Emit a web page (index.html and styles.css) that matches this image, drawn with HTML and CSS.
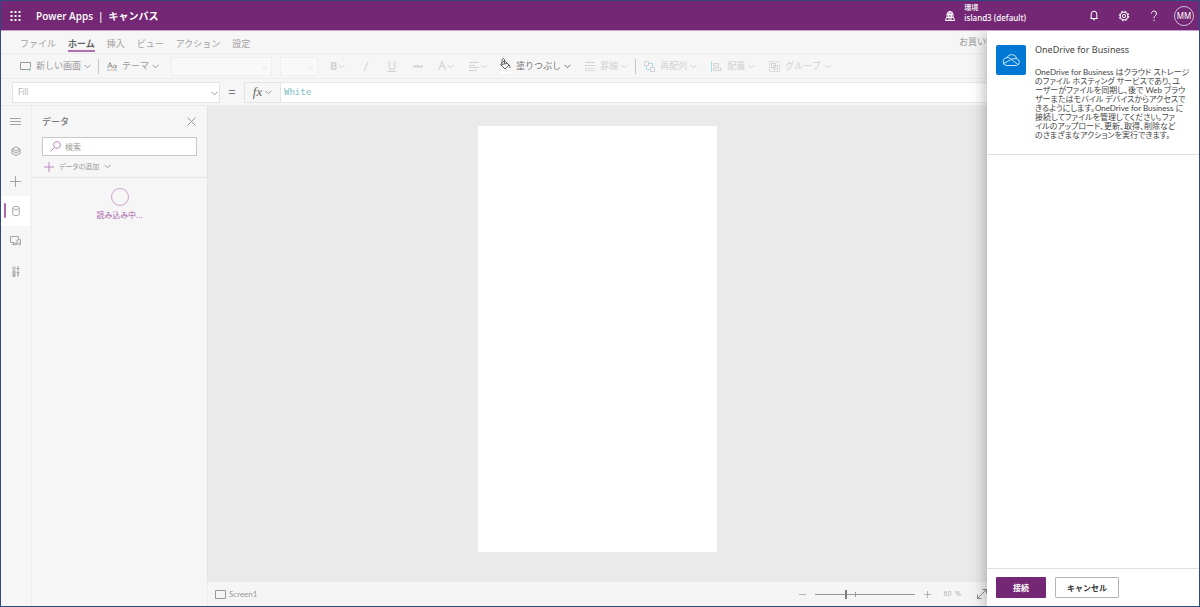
FILE: index.html
```html
<!DOCTYPE html>
<html lang="ja">
<head>
    <meta charset="UTF-8">
    <meta name="viewport" content="width=device-width, initial-scale=1.0">
    <title>Power Apps | キャンバス</title>
    <link rel="stylesheet" href="styles.css">
</head>
<body>
<svg class="defs" aria-hidden="true">
    <symbol id="chev" viewBox="0 0 7 5"><path d="M.5 .8l3 3 3-3"/></symbol>
</svg>

<header class="topbar">
    <button class="waffle" aria-label="アプリ起動ツール">
        <svg width="11" height="11" viewBox="0 0 11 11"><path d="M1.5 0v11M5.5 0v11M9.5 0v11" stroke-width="2" stroke-dasharray="2 2" stroke-dashoffset="3"/></svg>
    </button>
    <h1 class="brand">Power Apps<span class="bar">|</span>キャンバス</h1>
    <div class="environment">
        <svg width="10" height="10" viewBox="0 0 10 10"><path d="M2 6V3.5a3 3 0 0 1 6 0V6M5 .5v6M3.6 6V3c0-1 .5-2 1.4-2.500.9.5 1.400 1.500 1.400 2.500v3M2 3.500h6M1.500 6.500h7l1 3h-9zM3 8h4"/></svg>
        <div class="env-text">
            <div class="env-label">環境</div>
            <div class="env-name">island3 (default)</div>
        </div>
    </div>
    <button class="top-icon" aria-label="通知">
        <svg width="10" height="11" viewBox="0 0 10 11"><path d="M2.200 8V4a2.800 2.800 0 0 1 5.600 0v4M1.200 8.500h7.600M4 9.500q1 1 2 0"/></svg>
    </button>
    <button class="top-icon" aria-label="設定">
        <svg width="12" height="12" viewBox="0 0 12 12"><circle cx="6" cy="6" r="4.800" stroke-width="1" stroke-dasharray="2 1.770"/><circle cx="6" cy="6" r="3.900"/><circle cx="6" cy="6" r="1.600"/></svg>
    </button>
    <button class="top-icon" aria-label="ヘルプ">
        <svg width="8" height="12" viewBox="0 0 8 12"><path d="M1.500 3.500a2.500 2.500 0 1 1 4.200 1.800C4.500 6.300 4 6.800 4 8.300M4 9.800v1.200"/></svg>
    </button>
    <button class="avatar">MM</button>
</header>

<div class="app">
    <div class="studio">
        <nav class="menu">
            <a href="#">ファイル</a>
            <a href="#" class="current">ホーム</a>
            <a href="#">挿入</a>
            <a href="#">ビュー</a>
            <a href="#">アクション</a>
            <a href="#">設定</a>
            <span class="app-name">お買い物</span>
        </nav>

        <div class="toolbar">
            <button class="tool">
                <svg width="11" height="10" viewBox="0 0 11 10"><path d="M8 8.500H.5v-7h10v5"/><path class="green" d="M9.500 7v3M8 8.500h3"/></svg>
                新しい画面<svg class="chev"><use href="#chev"/></svg>
            </button>
            <span class="divider"></span>
            <button class="tool theme">
                <svg width="10" height="10" viewBox="0 0 10 10"><path d="M.5 7L3 1.500 5.500 7M1.300 5.200h3.400M9 4v3.200M9 5.500a1.500 1.500 0 1 0 0 .2"/><path class="blue" d="M0 9h3"/><path class="orange" d="M3 9h4"/><path class="blue" d="M7 9h3"/></svg>
                テーマ<svg class="chev"><use href="#chev"/></svg>
            </button>
            <div class="picker font-picker"><select aria-label="フォント" disabled></select><svg class="chev"><use href="#chev"/></svg></div>
            <div class="picker size-picker"><select aria-label="フォント サイズ" disabled></select><svg class="chev"><use href="#chev"/></svg></div>
            <div class="formats">
                <button class="tool off bold">B<svg class="chev"><use href="#chev"/></svg></button>
                <button class="tool off glyph" aria-label="斜体"><svg width="6" height="11" viewBox="0 0 6 11"><path d="M1 10L5 1"/></svg></button>
                <button class="tool off glyph underline">U</button>
                <button class="tool off glyph strike">abc</button>
                <button class="tool off glyph">A<svg class="chev"><use href="#chev"/></svg></button>
                <button class="tool off" aria-label="配置"><svg width="10" height="9" viewBox="0 0 10 9"><path d="M0 .5h10M0 3.500h6M0 5.500h10M0 8.500h8"/></svg><svg class="chev"><use href="#chev"/></svg></button>
            </div>
            <button class="tool fill">
                <svg width="12" height="16" viewBox="0 0 12 16"><path class="dark" d="M5.500 2.500L10 7l-4 4-4.500-4.500zM2 6.500l6-1M3 5V1.500q1.500-1.500 2.500 0V6M10 6.500q1.500 2 .8 3.500"/><path class="swatch" d="M0 14.500h12"/></svg>
                塗りつぶし<svg class="chev"><use href="#chev"/></svg>
            </button>
            <button class="tool off">
                <svg width="10" height="9" viewBox="0 0 10 9"><path d="M0 .5h10M0 3.500h10"/><path d="M0 6.500h10M0 8.500h10" stroke-dasharray="2 1"/></svg>
                罫線<svg class="chev"><use href="#chev"/></svg>
            </button>
            <span class="divider"></span>
            <button class="tool off">
                <svg width="11" height="11" viewBox="0 0 11 11"><path d="M.5 .5h4v4h-4zM6.500 6.500h4v4h-4z"/><path class="cyan" d="M5 2.500h3.500v3.500M2.500 5v3.500H6"/></svg>
                再配列<svg class="chev"><use href="#chev"/></svg>
            </button>
            <button class="tool off">
                <svg width="11" height="11" viewBox="0 0 11 11"><path class="cyan" d="M.5 0v11"/><path d="M2.500 2.500h5v2.500h-5zM2.500 7h7.500v2.500H2.500z"/></svg>
                配置<svg class="chev"><use href="#chev"/></svg>
            </button>
            <button class="tool off">
                <svg width="11" height="11" viewBox="0 0 11 11"><path d="M.5 .5h10v10H.5z" stroke-dasharray="2 1"/><path d="M2.500 2.500h4v4h-4zM4.500 4.500h4v4h-4z"/></svg>
                グループ<svg class="chev"><use href="#chev"/></svg>
            </button>
        </div>

        <div class="formula">
            <div class="property">
                <select aria-label="プロパティ"><option>Fill</option></select>
                <svg class="chev"><use href="#chev"/></svg>
            </div>
            <span class="equals">=</span>
            <button class="fx"><i>fx</i><svg class="chev"><use href="#chev"/></svg></button>
            <input class="expression" type="text" aria-label="数式" value="White">
        </div>

        <div class="body">
            <nav class="rail">
                <button aria-label="メニュー"><svg width="11" height="11" viewBox="0 0 11 11"><path d="M0 2.500h11M0 5.500h11M0 8.500h11"/></svg></button>
                <button aria-label="ツリー ビュー"><svg width="10" height="10" viewBox="0 0 10 10"><path d="M5 .8l4 2-4 2-4-2zM1 3v4.500l4 2 4-2V3M1 5l4 2 4-2"/></svg></button>
                <button aria-label="挿入"><svg width="11" height="11" viewBox="0 0 11 11"><path d="M5.500 0v11M0 5.500h11"/></svg></button>
                <button class="active" aria-label="データ"><svg width="8" height="10" viewBox="0 0 8 10"><path d="M.8 2v6c0 2 6.400 2 6.400 0V2M.8 2c0-2 6.400-2 6.400 0s-6.400 2-6.400 0"/></svg></button>
                <button aria-label="メディア"><svg width="11" height="10" viewBox="0 0 11 10"><path d="M4.500 6.500h-4v-6h8V3M2 8.500h3M3.500 6.500v2M7 8V4l3.500-.5v4.500"/><circle cx="6" cy="8" r="1"/><circle cx="9.500" cy="8" r="1"/></svg></button>
                <button aria-label="詳細ツール"><svg width="8" height="11" viewBox="0 0 8 11"><path d="M2 4.500v6M1 .5V3l1 1.500L3 3V.5M1 5v5.500h2V5M6 0v11M4.500 2.500h3M4.500 6.500h3M5 8.500h2"/></svg></button>
            </nav>

            <aside class="data-pane">
                <div class="pane-head">
                    <h2>データ</h2>
                    <button aria-label="閉じる"><svg width="9" height="9" viewBox="0 0 9 9"><path d="M.5 .5l8 8M8.500 .5l-8 8"/></svg></button>
                </div>
                <label class="search">
                    <svg width="11" height="11" viewBox="0 0 11 11"><circle cx="7" cy="4" r="3.400"/><path d="M4.500 6.500l-4 4"/></svg>
                    <input type="search" placeholder="検索" aria-label="検索">
                </label>
                <button class="add-data">
                    <svg width="10" height="10" viewBox="0 0 10 10"><path d="M5 0v10M0 5h10"/></svg>
                    データの追加<svg class="chev"><use href="#chev"/></svg>
                </button>
                <div class="loading">
                    <div class="spinner"></div>
                    読み込み中...
                </div>
            </aside>

            <main class="workspace">
                <div class="stage"><div class="screen"></div></div>
                <footer class="statusbar">
                    <button class="crumb"><svg width="11" height="9" viewBox="0 0 11 9"><path d="M.5 .5h10v8H.5z"/></svg>Screen1</button>
                    <div class="zoom">
                        <button aria-label="縮小"><svg width="7" height="7" viewBox="0 0 7 7"><path d="M0 3.500h7"/></svg></button>
                        <input type="range" min="0" max="100" value="31" aria-label="ズーム">
                        <button aria-label="拡大"><svg width="7" height="7" viewBox="0 0 7 7"><path d="M0 3.500h7M3.500 0v7"/></svg></button>
                        <span class="percent">60&nbsp; %</span>
                        <button class="fit" aria-label="ウィンドウに合わせる"><svg width="10" height="10" viewBox="0 0 10 10"><path d="M1 9l8-8M5.500 .5h4v4M.5 5.500v4h4"/></svg></button>
                    </div>
                </footer>
            </main>
        </div>
    </div>

    <section class="connect">
        <div class="connector">
            <div class="logo">
                <svg width="20" height="14" viewBox="0 0 20 14"><path d="M5 12.500h10.500a3.500 3.500 0 0 0 .3-6.800A5.200 5.200 0 0 0 6 4.500 4.100 4.100 0 0 0 5 12.500zM6 4.500c2 0 3 .8 4.500 1.800l6.500 5.500M2 11l8.500-4.700q2.500-1.300 5.300-.6"/></svg>
            </div>
            <div class="about">
                <h2>OneDrive for Business</h2>
                <p>OneDrive for Business はクラウド ストレージ<br>のファイル ホスティング サービスであり、ユ<br>ーザーがファイルを同期し、後で Web ブラウ<br>ザーまたはモバイル デバイスからアクセスで<br>きるようにします。OneDrive for Business に<br>接続してファイルを管理してください。ファ<br>イルのアップロード、更新、取得、削除など<br>のさまざまなアクションを実行できます。</p>
            </div>
        </div>
        <div class="actions">
            <button class="primary">接続</button>
            <button class="secondary">キャンセル</button>
        </div>
    </section>
</div>
</body>
</html>
```
FILE: styles.css
```css
* {
    box-sizing: border-box;
}
body {
    margin: 0;
    height: 100vh;
    display: flex;
    flex-direction: column;
    border: 1px solid #2f4a80;
    background: #f6f6f6;
    color: #999;
    font: 9px/12px "Noto Sans", "Noto Sans CJK JP", sans-serif;
    overflow: hidden;
}
button, select, input {
    margin: 0;
    padding: 0;
    border: 0;
    border-radius: 0;
    background: none;
    color: inherit;
    font: inherit;
    appearance: none;
    outline: none;
}
button {
    display: flex;
    align-items: center;
    justify-content: center;
    white-space: nowrap;
}
h1, h2, p {
    margin: 0;
}
svg {
    flex: none;
    fill: none;
    stroke: currentColor;
}
.defs {
    position: absolute;
    width: 0;
    height: 0;
}
.chev {
    width: 7px;
    height: 5px;
}

/* top bar */
.topbar {
    flex: none;
    display: flex;
    align-items: center;
    height: 30px;
    padding-right: 5px;
    border-bottom: 1px solid #c9a2c9;
    background: #742774;
    color: #fff;
}
.waffle {
    width: 29px;
    height: 29px;
}
.brand {
    margin-left: 6px;
    font-family: "Open Sans", "Noto Sans CJK JP", sans-serif;
    font-size: 10px;
    font-weight: 600;
}
.bar {
    margin: 0 5px;
}
.environment {
    display: flex;
    align-items: center;
    gap: 9px;
    margin-left: auto;
    margin-right: 53px;
    line-height: 10px;
}
.env-text {
    margin-bottom: 5px;
}
.env-label {
    font-size: 7px;
    font-weight: 500;
}
.env-name {
    font-size: 8px;
    font-weight: 500;
}
.top-icon {
    width: 30px;
    height: 29px;
}
.avatar {
    width: 20px;
    height: 20px;
    margin-left: 5px;
    border: 1px solid #d5bed5;
    border-radius: 50%;
    font-size: 8px;
}

/* shell */
.app {
    flex: 1;
    display: flex;
    min-height: 0;
}
.studio {
    flex: 1;
    min-width: 0;
    display: flex;
    flex-direction: column;
    overflow: hidden;
}

/* menu */
.menu {
    flex: none;
    display: flex;
    align-items: flex-end;
    gap: 12px;
    height: 23px;
    padding-left: 19px;
    border-bottom: 1px solid #ececec;
    white-space: nowrap;
}
.menu a {
    height: 18px;
    border-bottom: 2px solid transparent;
    margin-bottom: 1px;
    padding-top: 4px;
    color: #a2a2a2;
    text-decoration: none;
}
.menu .current {
    border-color: #b070b0;
    color: #666;
    font-weight: 700;
}
.app-name {
    width: 28px;
    height: 17px;
    margin-left: auto;
}

/* toolbar */
.toolbar {
    flex: none;
    display: flex;
    align-items: center;
    height: 25px;
    padding-left: 19px;
    border-bottom: 1px solid #ececec;
}
.tool {
    gap: 5px;
    margin-right: 14px;
    color: #999;
}
.tool .chev {
    margin-left: -2px;
}
.tool:has(+ .divider) {
    margin-right: 7px;
}
.tool.off {
    color: #d2d2d2;
}
.divider {
    width: 1px;
    height: 15px;
    margin-right: 8px;
    background: #c8c8c8;
}
.tool.theme {
    margin-right: 12px;
}
.picker {
    position: relative;
    height: 19px;
    border: 1px solid #efefef;
    background: #f9f9f9;
}
.picker select {
    width: 100%;
    height: 100%;
}
.picker .chev {
    position: absolute;
    right: 3px;
    top: 7px;
    color: #e2e2e2;
}
.font-picker {
    width: 101px;
    margin-right: 8px;
}
.size-picker {
    width: 38px;
    margin-right: 12px;
}
.formats {
    display: flex;
    align-items: center;
    gap: 15px;
    margin-right: 12px;
}
.formats .tool {
    gap: 3px;
    margin: 0;
}
.bold {
    font-size: 11px;
    font-weight: 700;
}
.glyph {
    min-width: 11px;
    font-size: 12px;
}
.underline {
    text-decoration: underline;
}
.strike {
    font-size: 6px;
    text-decoration: line-through;
}
.fill {
    color: #777;
}
.green {
    stroke: #8cc79a;
}
.blue {
    stroke: #8db8e0;
}
.orange {
    stroke: #efb184;
}
.cyan {
    stroke: #a9dfe6;
}
.dark {
    stroke: #666;
}
.swatch {
    stroke: #fff;
    stroke-width: 2;
}

/* formula bar */
.formula {
    flex: none;
    display: flex;
    align-items: center;
    height: 27px;
    padding-left: 11px;
    border-bottom: 1px solid #ececec;
}
.property {
    position: relative;
    width: 208px;
    height: 21px;
    border: 1px solid #e4e4e4;
    background: #fff;
}
.property select {
    width: 100%;
    height: 100%;
    padding-left: 5px;
    color: #b0b0b0;
    font-size: 8px;
}
.property .chev {
    position: absolute;
    right: 1px;
    top: 8px;
}
.equals {
    width: 24px;
    color: #777;
    font-size: 13px;
    text-align: center;
}
.fx {
    width: 37px;
    height: 21px;
    gap: 3px;
    border: 1px solid #e4e4e4;
}
.fx i {
    color: #666;
    font: italic 13px/16px "Liberation Serif", serif;
}
.expression {
    flex: 1;
    min-width: 0;
    height: 21px;
    padding-left: 3px;
    border: solid #e8e8e8;
    border-width: 1px 0;
    background: #fff;
    color: #7cbcc4;
    font: 9px "DejaVu Sans Mono", monospace;
}

/* left rail */
.body {
    flex: 1;
    display: flex;
    min-height: 0;
}
.rail {
    flex: none;
    width: 31px;
    border-right: 1px solid #ededed;
}
.rail button {
    width: 29px;
    height: 30px;
    color: #a4a4a4;
}
.rail .active {
    position: relative;
    background: #fff;
}
.rail .active::before {
    content: "";
    position: absolute;
    left: 3px;
    top: 7px;
    width: 2px;
    height: 15px;
    border-radius: 1px;
    background: #aa6aaa;
}

/* data pane */
.data-pane {
    flex: none;
    width: 175px;
}
.pane-head {
    display: flex;
    align-items: center;
    justify-content: space-between;
    height: 31px;
    padding: 0 11px 0 10px;
}
.pane-head h2 {
    color: #777;
    font-size: 9px;
    font-weight: 500;
}
.search {
    display: flex;
    align-items: center;
    gap: 4px;
    height: 19px;
    margin: 0 10px;
    padding-left: 7px;
    border: 1px solid #c8c8c8;
    background: #fff;
    color: #b98ab9;
}
.search input {
    flex: 1;
    min-width: 0;
    font-size: 8px;
}
.search input::placeholder {
    color: #999;
}
.add-data {
    gap: 5px;
    justify-content: flex-start;
    width: 100%;
    height: 22px;
    padding-left: 12px;
    border-bottom: 1px solid #e6e6e6;
    font-size: 7px;
    font-feature-settings: "palt";
}
.add-data svg:first-child {
    color: #b98ab9;
}
.loading {
    padding-top: 10px;
    color: #a860a8;
    font-size: 8px;
    text-align: center;
    font-feature-settings: "palt";
}
.spinner {
    width: 18px;
    height: 18px;
    margin: 0 auto 3px;
    border: 1px solid #cba5cb;
    border-radius: 50%;
}

/* workspace */
.workspace {
    flex: 1;
    min-width: 0;
    display: flex;
    flex-direction: column;
}
.stage {
    flex: 1;
    min-height: 0;
    display: flex;
    justify-content: center;
    padding: 20px 0 30px;
    border-left: 1px solid #e4e4e4;
    background: #eaeaea;
}
.screen {
    height: 100%;
    aspect-ratio: 9 / 16;
    background: #fff;
}
.statusbar {
    flex: none;
    display: flex;
    align-items: center;
    justify-content: space-between;
    height: 24px;
    padding-left: 7px;
    border-left: 1px solid #ececec;
    background: #f5f5f5;
}
.crumb {
    gap: 3px;
    font-family: Lato, sans-serif;
    font-size: 8px;
}
.zoom {
    display: flex;
    align-items: center;
    gap: 9px;
}
.zoom button {
    color: #b4b4b4;
}
.zoom .fit {
    color: #888;
}
.percent {
    margin: 0 7px 0 4px;
    color: #b4b4b4;
    font-size: 7px;
}
.zoom input {
    width: 100px;
    height: 9px;
    background:
        linear-gradient(#999, #999) 40px 50% / 1px 5px no-repeat,
        linear-gradient(#999, #999) 0 50% / 100% 1px no-repeat;
}
.zoom input::-webkit-slider-thumb {
    appearance: none;
    width: 2px;
    height: 9px;
    background: #808080;
}

/* connection panel */
.connect {
    position: relative;
    flex: none;
    display: flex;
    flex-direction: column;
    width: 212px;
    background: #fff;
    box-shadow: 0 3px 16px rgba(0, 0, 0, 0.35);
    clip-path: inset(0 0 0 -30px);
    color: #444;
}
.connector {
    display: flex;
    gap: 9px;
    padding: 14px 0 14px 9px;
    border-bottom: 1px solid #e0e0e0;
}
.logo {
    flex: none;
    display: flex;
    align-items: center;
    justify-content: center;
    width: 30px;
    height: 30px;
    border-radius: 2px;
    background: #0078d4;
    color: #fff;
}
.logo svg {
    opacity: 0.8;
}
.about h2 {
    margin: -1px 0 12px;
    font-size: 9px;
    font-weight: 400;
}
.about p {
    font-family: Lato, "Noto Sans CJK JP", sans-serif;
    font-size: 8px;
    line-height: 9px;
    white-space: nowrap;
    font-feature-settings: "palt";
}
.actions {
    display: flex;
    gap: 9px;
    margin-top: auto;
    padding: 8px 9px;
    border-top: 1px solid #e0e0e0;
}
.actions button {
    height: 21px;
    border-radius: 1px;
    font-size: 8px;
    font-weight: 600;
}
.primary {
    width: 50px;
    background: #742774;
    color: #fff;
}
.secondary {
    width: 64px;
    border: 1px solid #b4b4b4;
    color: #333;
}
```
